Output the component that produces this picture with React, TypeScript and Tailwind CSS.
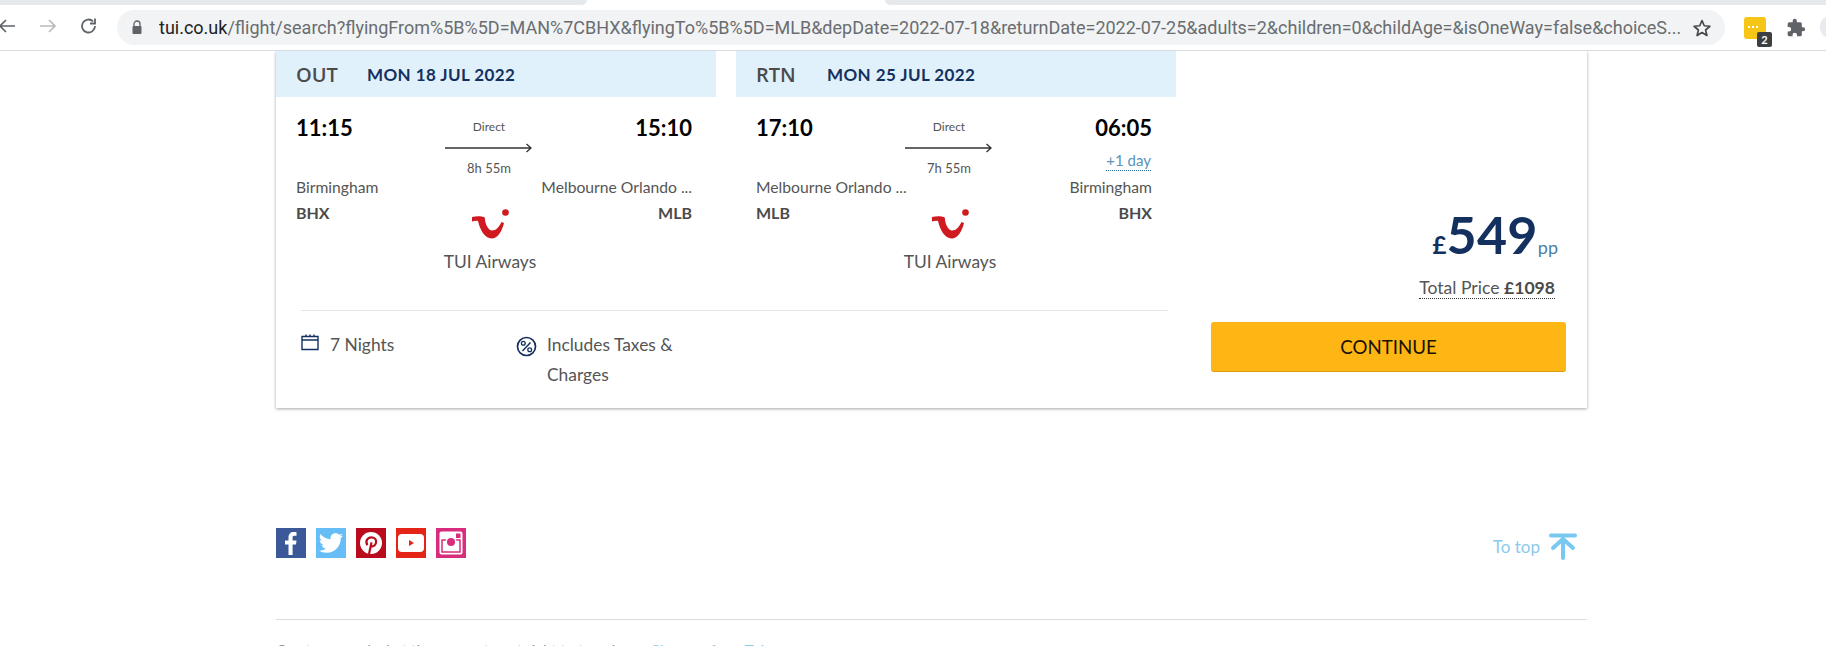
import React from "react";

function TuiLogo() {
  return (
    <svg width="37" height="30" viewBox="0 0 37 30" className="block">
      <path d="M0 8 C4 7 9 7 12 8 C13 8.500 13 10 13 11 C14 17 17 21.500 20 21.500 C24 21.500 27 18 29.500 13 L32 14 C30 22 26 29.500 19.500 29.500 C13 29.500 8 21 6 12 C4 11.500 2 12 0 12.500 Z" fill="#cf1a1f" />
      <circle cx="33.500" cy="3.500" r="3.300" fill="#cf1a1f" />
    </svg>
  );
}

function Leg({ label, date, dep, arr, from, fromCode, to, toCode, dur, plus }: { label: string; date: string; dep: string; arr: string; from: string; fromCode: string; to: string; toCode: string; dur: string; plus?: boolean }) {
  return (
    <div className="w-[440px] shrink-0">
      <div className="h-[46px] bg-[#e0f1fc] flex items-center pl-[20px] pt-[2px]">
        <span className="w-[71px] text-[20px] text-[#4b4b4b] font-['Open_Sans','Lato',sans-serif] font-semibold">{label}</span>
        <span className="text-[17px] font-bold text-[#14305f] tracking-[0.4px]">{date}</span>
      </div>
      <div className="relative h-[213px] pl-[20px] pr-[24px] text-[#555]">
        <div className="flex justify-between pt-[16px] h-[44px] text-[22px] leading-[30px] font-bold text-black">
          <span>{dep}</span>
          <span>{arr}</span>
        </div>
        <div className="flex justify-between mt-[34px] text-[15.7px] leading-[24px]">
          <span>{from}</span>
          <span>{to}</span>
        </div>
        <div className="flex justify-between mt-[2px] text-[16px] leading-[24px] font-bold text-[#4b4b4b]">
          <span>{fromCode}</span>
          <span>{toCode}</span>
        </div>
        {plus && (
          <span className="absolute right-[25px] top-[53px] text-[15px] leading-[20px] text-[#5a93bb] border-b border-dotted border-[#2a6f9f]">+1 day</span>
        )}
        <div className="absolute left-[167px] top-[22px] w-[92px] flex flex-col items-center text-[#555]">
          <span className="text-[12px] leading-[16px]">Direct</span>
          <svg width="88" height="10" viewBox="0 0 88 10" className="mt-[8px] block">
            <path d="M0 5 H86 M81.500 1 L86 5 L81.500 9" fill="none" stroke="#333" strokeWidth="1.300" />
          </svg>
          <span className="mt-[6px] text-[13px] leading-[18px]">{dur}</span>
        </div>
        <div className="absolute left-[149px] top-[112px] w-[130px] flex flex-col items-center">
          <TuiLogo />
          <span className="mt-[11px] text-[17.4px] leading-[24px] text-[#555]">TUI Airways</span>
        </div>
      </div>
    </div>
  );
}

function Social() {
  return (
    <div className="flex gap-[10px]">
      <div className="w-[30px] h-[30px] bg-[#3b5998] flex items-end justify-center overflow-hidden">
        <svg width="30" height="30" viewBox="0 0 30 30"><path d="M12.500 27 V16.500 H9 V12.500 H12.500 V9.500 C12.500 6 14.500 4 17.500 4 C19 4 20 4.100 20.500 4.200 V7.800 H18.400 C16.800 7.800 16.600 8.600 16.600 9.700 V12.500 H20.500 L20 16.500 H16.600 V27 Z" fill="#fff" /></svg>
      </div>
      <div className="w-[30px] h-[30px] bg-[#67bdf5] flex items-center justify-center">
        <svg width="26" height="26" viewBox="0 0 24 24"><path d="M23 5c-.8.4-1.700.6-2.600.7.900-.6 1.600-1.400 2-2.500-.9.500-1.800.9-2.900 1.100A4.600 4.600 0 0 0 11.700 8.500C7.900 8.300 4.500 6.500 2.200 3.700c-1.200 2.100-.6 4.800 1.400 6.100-.7 0-1.400-.2-2-.6 0 2.200 1.600 4.100 3.700 4.600-.7.2-1.400.2-2.100.1.600 1.800 2.300 3.100 4.300 3.200A9.300 9.300 0 0 1 .7 19c2.100 1.300 4.500 2.100 7.100 2.100 8.600 0 13.500-7.300 13.200-13.800.9-.6 1.700-1.400 2-2.300z" fill="#fff" /></svg>
      </div>
      <div className="w-[30px] h-[30px] bg-[#b90b1d] flex items-center justify-center">
        <svg width="26" height="26" viewBox="0 0 26 26"><circle cx="13" cy="13" r="11" fill="#fff" /><path d="M11 24 L13.500 12.500 M9.300 15.200 C7 11 9.500 7.300 13.500 7.300 C17.500 7.300 18.800 10.500 17.800 13.500 C16.800 16.500 13.500 17.200 12.300 15" fill="none" stroke="#b90b1d" strokeWidth="2.200" /></svg>
      </div>
      <div className="w-[30px] h-[30px] bg-[#e32416] flex items-center justify-center">
        <div className="w-[26px] h-[18px] bg-white rounded-[4px] flex items-center justify-center">
          <svg width="8" height="8" viewBox="0 0 8 8"><path d="M2 1 L7 4 L2 7 Z" fill="#e32416" /></svg>
        </div>
      </div>
      <div className="w-[30px] h-[30px] bg-[#d82c7c] flex items-center justify-center">
        <svg width="24" height="24" viewBox="0 0 24 24"><rect x="0.500" y="0.500" width="23" height="23" rx="2" fill="#fff" /><path d="M3 9 H21 V21 H3 Z" fill="#fff" stroke="#d82c7c" strokeWidth="1.500" /><circle cx="12" cy="11" r="5.500" fill="#fff" /><circle cx="12" cy="11" r="4" fill="#d82c7c" /><rect x="17" y="2.500" width="4.500" height="4.500" fill="#d82c7c" /></svg>
      </div>
    </div>
  );
}

export default function App() {
  return (
    <div className="h-[646px] w-[1826px] overflow-hidden bg-white font-['Lato',sans-serif] relative">
      {/* browser chrome */}
      <div className="h-[5px] flex">
        <div className="w-[587px] bg-[#e6e9ec] rounded-br-[6px]" />
        <div className="flex-1 ml-[298px] bg-[#e6e9ec] rounded-bl-[6px]" />
      </div>
      <div className="h-[46px] bg-white border-b border-[#d9dbde] flex items-center relative">
        <svg width="20" height="20" viewBox="0 0 20 20" className="absolute left-[-3px] top-[11px]"><path d="M18 10 H3 M9 4 L3 10 L9 16" fill="none" stroke="#5f6368" strokeWidth="1.700" /></svg>
        <svg width="20" height="20" viewBox="0 0 20 20" className="absolute left-[38px] top-[11px]"><path d="M2 10 H17 M11 4 L17 10 L11 16" fill="none" stroke="#b9bbbe" strokeWidth="1.700" /></svg>
        <svg width="20" height="20" viewBox="0 0 20 20" className="absolute left-[79px] top-[11px]"><path d="M16 10 A6.500 6.500 0 1 1 14 5.300 M16 2.500 V7.500 H11" fill="none" stroke="#5f6368" strokeWidth="1.800" /></svg>
        <div className="ml-[117px] w-[1608px] h-[35px] rounded-full bg-[#f1f3f4] flex items-center pl-[14px] shrink-0">
          <svg width="12" height="15" viewBox="0 0 12 15" className="shrink-0"><path d="M3 6 V4 A3 3 0 0 1 9 4 V6" fill="none" stroke="#5f6368" strokeWidth="1.300" /><rect x="1.500" y="6" width="9" height="8" rx="1" fill="#5f6368" /></svg>
          <span className="ml-[16px] w-[1528px] whitespace-nowrap overflow-hidden text-[18px] font-['Roboto','Open_Sans',sans-serif] text-[#6a6d70]"><span className="text-[#202124]">tui.co.uk</span>/flight/search?flyingFrom%5B%5D=MAN%7CBHX&amp;flyingTo%5B%5D=MLB&amp;depDate=2022-07-18&amp;returnDate=2022-07-25&amp;adults=2&amp;children=0&amp;childAge=&amp;isOneWay=false&amp;choiceS...</span>
          <svg width="20" height="20" viewBox="0 0 24 24" className="ml-auto mr-[13px] shrink-0"><path d="M12 3 L14.700 9.300 L21.500 9.900 L16.300 14.400 L17.900 21 L12 17.500 L6.100 21 L7.700 14.400 L2.500 9.900 L9.300 9.300 Z" fill="none" stroke="#45484b" strokeWidth="2" strokeLinejoin="round" /></svg>
        </div>
        <div className="absolute left-[1744px] top-[12px] w-[22px] h-[22px] rounded-[3px] bg-[#f5c518]">
          <div className="absolute left-[4px] top-[9px] flex gap-[2px]"><i className="w-[2px] h-[2px] bg-white" /><i className="w-[2px] h-[2px] bg-white" /><i className="w-[2px] h-[2px] bg-white" /></div>
          <div className="absolute left-[13px] top-[15px] w-[15px] h-[15px] rounded-[2px] bg-[#3c4043] text-white text-[11px] leading-[15px] font-bold text-center">2</div>
        </div>
        <svg width="20" height="20" viewBox="0 0 24 24" className="absolute left-[1786px] top-[13px]"><path d="M20.500 11H19V7a2 2 0 0 0-2-2h-4V3.500a2.500 2.500 0 0 0-5 0V5H4a2 2 0 0 0-2 2v3.800h1.500a2.700 2.700 0 0 1 0 5.400H2V20a2 2 0 0 0 2 2h3.800v-1.500a2.700 2.700 0 0 1 5.400 0V22H17a2 2 0 0 0 2-2v-4h1.500a2.500 2.500 0 0 0 0-5z" fill="#5f6368" /></svg>
        <div className="absolute left-[1820px] top-[10px] w-[24px] h-[24px] rounded-full bg-[#e8eaed]" />
      </div>

      {/* content */}
      <div className="ml-[276px] w-[1311px]">
        <div className="h-[357px] bg-white shadow-[0_1px_3px_rgba(0,0,0,0.35)] flex">
          <div className="w-[901px] shrink-0">
            <div className="flex gap-[20px]">
              <Leg label="OUT" date="MON 18 JUL 2022" dep="11:15" arr="15:10" from="Birmingham" fromCode="BHX" to="Melbourne Orlando ..." toCode="MLB" dur="8h 55m" />
              <Leg label="RTN" date="MON 25 JUL 2022" dep="17:10" arr="06:05" from="Melbourne Orlando ..." fromCode="MLB" to="Birmingham" toCode="BHX" dur="7h 55m" plus />
            </div>
            <div className="ml-[25px] w-[867px] border-t border-[#e6e6e0] pt-[20px] flex text-[17.4px] leading-[30px] text-[#555]">
              <div className="w-[215px] flex items-start">
                <svg width="18" height="18" viewBox="0 0 18 18" className="mt-[2px] shrink-0"><path d="M1 3.500 H17 V16.500 H1 Z M1 7 H17 M5 1.500 V4 M9 1.500 V4 M13 1.500 V4" fill="none" stroke="#14305f" strokeWidth="1.400" /></svg>
                <span className="ml-[11px] -mt-[1px]">7 Nights</span>
              </div>
              <div className="w-[185px] flex items-start">
                <svg width="21" height="21" viewBox="0 0 21 21" className="mt-[5px] shrink-0"><circle cx="10.500" cy="10.500" r="9" fill="none" stroke="#14305f" strokeWidth="1.700" /><path d="M6.500 15 L14.500 6.500" stroke="#14305f" strokeWidth="1.500" /><circle cx="7.300" cy="7.300" r="1.900" fill="none" stroke="#14305f" strokeWidth="1.300" /><circle cx="13.700" cy="13.700" r="1.900" fill="none" stroke="#14305f" strokeWidth="1.300" /></svg>
                <span className="ml-[10px] -mt-[1px]">Includes Taxes &amp; Charges</span>
              </div>
            </div>
          </div>
          <div className="flex-1 pl-[34px] pr-[21px] pt-[152px] flex flex-col items-stretch">
            <div className="flex items-baseline justify-end mr-[8px] h-[62px] text-[#14305f]">
              <span className="text-[24px] font-bold leading-none">£</span>
              <span className="text-[52px] font-bold leading-[62px] tracking-[0.3px]">549</span>
              <span className="text-[18px] text-[#4a7fa8]">pp</span>
            </div>
            <div className="flex justify-end pr-[11px] mt-[13px]">
              <span className="text-[17.6px] leading-[20px] text-[#555] border-b border-dotted border-[#333]">Total Price <b className="font-bold text-[#4b4b4b]">£1098</b></span>
            </div>
            <button className="mt-[23px] h-[50px] pt-[2px] rounded-[3px] bg-[#fdb614] border-b border-[#d99a10] text-[18.7px] text-[#1b1100]">CONTINUE</button>
          </div>
        </div>

        <div className="mt-[120px] flex justify-between items-start h-[92px] border-b border-[#dcdcdc]">
          <Social />
          <div className="flex items-center mr-[10px] mt-[5px] text-[#8dc9ec] text-[17px]">
            <span>To top</span>
            <svg width="28" height="27" viewBox="0 0 28 27" className="ml-[9px]"><path d="M2 2.500 H26 M14 25 V7 M4 15 L14 6 L24 15" fill="none" stroke="#78c8f2" strokeWidth="4" strokeLinecap="round" /></svg>
          </div>
        </div>
        <div className="mt-[19px] flex text-[15px] text-[#8a8a8a] whitespace-nowrap">
          <span className="w-[374px]">Our terms and what they mean to get right to travel.</span>
          <span className="text-[#8dc9ec]">Changes from Tui</span>
        </div>
      </div>
    </div>
  );
}
